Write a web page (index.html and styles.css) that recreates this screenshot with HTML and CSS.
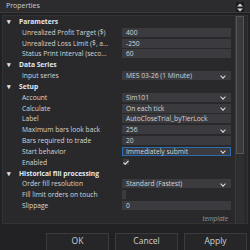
FILE: index.html
```html
<!DOCTYPE html>
<html lang="en">
<head>
<meta charset="UTF-8">
<title>Properties</title>
<link rel="stylesheet" href="styles.css">
</head>
<body>
<div class="window">

  <div class="title">Properties</div>
  <div class="sort-btn">
    <svg width="6" height="9" viewBox="0 0 6 9"><path d="M0 3.5 L3 0.5 L6 3.5 Z M0 5.5 L3 8.5 L6 5.5 Z" fill="#d8d8d8"/></svg>
  </div>

  <div class="grid">
    <div class="rows">

      <div class="row cat"><span class="caret">▾</span>Parameters</div>
      <div class="row"><span class="name">Unrealized Profit Target ($)</span><span class="val">400</span></div>
      <div class="row"><span class="name">Unrealized Loss Limit ($, a...</span><span class="val">-250</span></div>
      <div class="row"><span class="name">Status Print Interval (seco...</span><span class="val">60</span></div>

      <div class="row cat"><span class="caret">▾</span>Data Series</div>
      <div class="row"><span class="name">Input series</span><span class="val drop">MES 03-26 (1 Minute)</span></div>

      <div class="row cat"><span class="caret">▾</span>Setup</div>
      <div class="row"><span class="name">Account</span><span class="val drop">Sim101</span></div>
      <div class="row"><span class="name">Calculate</span><span class="val drop">On each tick</span></div>
      <div class="row"><span class="name">Label</span><span class="val">AutoCloseTrial_byTierLock</span></div>
      <div class="row"><span class="name">Maximum bars look back</span><span class="val drop">256</span></div>
      <div class="row"><span class="name">Bars required to trade</span><span class="val">20</span></div>
      <div class="row"><span class="name">Start behavior</span><span class="val drop focus">Immediately submit</span></div>
      <div class="row"><span class="name">Enabled</span><span class="check"><svg width="6" height="5" viewBox="0 0 6 5"><path d="M0.5 2.6 L2.2 4.2 L5.5 0.8" stroke="#e0e0e0" stroke-width="1.2" fill="none"/></svg></span></div>

      <div class="row cat"><span class="caret">▾</span>Historical fill processing</div>
      <div class="row"><span class="name">Order fill resolution</span><span class="val drop">Standard (Fastest)</span></div>
      <div class="row"><span class="name">Fill limit orders on touch</span><span class="val empty"></span></div>
      <div class="row"><span class="name">Slippage</span><span class="val">0</span></div>

      <div class="template">template</div>
    </div>

    <div class="scroll">
      <div class="thumb"></div>
    </div>
  </div>

  <div class="buttons">
    <div class="btn">OK</div>
    <div class="btn">Cancel</div>
    <div class="btn">Apply</div>
  </div>

</div>
</body>
</html>
```

FILE: styles.css
```css
:root {
  --bg: #212123;
  --panel: #29292b;
  --field: #3a3a3f;
  --border: #3c3c3e;
  --text: #d6d6d6;
  --head: #e2e8f2;
  --muted: #9a9a9a;
  --focus: #2a6db3;
}

* { margin: 0; padding: 0; box-sizing: border-box; }

body {
  background: var(--bg);
  color: var(--text);
  font-family: 'Open Sans', 'Noto Sans', sans-serif;
  font-size: 6.7px;
  width: 250px;
  height: 250px;
  overflow: hidden;
}

.window {
  position: relative;
  width: 250px;
  height: 250px;
  display: flex;
  flex-direction: column;
}

/* Title */
.title {
  height: 13px;
  line-height: 12px;
  padding-left: 6px;
  background: #2c2c2e;
  border-bottom: 1px solid #3a3a3c;
  color: #cfcfcf;
  font-size: 7px;
}

.sort-btn {
  position: absolute;
  top: 2px;
  right: 6px;
  width: 8px;
  height: 10px;
  display: flex;
  align-items: center;
  justify-content: center;
  background: #1c1c1e;
}

/* Property grid */
.grid {
  margin: 2px 2px 0 2px;
  height: 209px;
  background: var(--panel);
  border: 1px solid #333335;
  display: flex;
}

.rows {
  flex: 1;
  display: flex;
  flex-direction: column;
}

.row {
  height: 11px;
  display: flex;
  align-items: center;
  white-space: nowrap;
}

.row.cat {
  padding-left: 4px;
  color: var(--head);
  font-weight: 700;
}

.caret {
  width: 12px;
  font-size: 7px;
  color: #e6e6e6;
}

.name {
  width: 119px;
  padding-left: 19px;
  overflow: hidden;
}

.val {
  width: 109px;
  height: 9px;
  line-height: 9px;
  padding-left: 4px;
  background: var(--field);
  position: relative;
}

.val.empty { width: 4px; }

.val.drop::after {
  content: '';
  position: absolute;
  right: 6px;
  top: 2.5px;
  width: 3px;
  height: 3px;
  border-right: 1.2px solid #e0e0e0;
  border-bottom: 1.2px solid #e0e0e0;
  transform: rotate(45deg);
}

.val.focus {
  border: 1px solid var(--focus);
  line-height: 7px;
  padding-left: 3px;
}
.val.focus::after { right: 5px; top: 1.5px; }

.check {
  width: 6px;
  height: 6px;
  margin-left: 1px;
  display: flex;
  align-items: center;
  justify-content: center;
  background: #3d3d42;
}

.template {
  text-align: right;
  padding-right: 3px;
  margin-top: 3px;
  font-style: italic;
  font-size: 6.5px;
  color: var(--muted);
}

/* Scrollbar */
.scroll {
  width: 9px;
  margin: 0 3px 0 4px;
  background: #2e2e30;
  border-left: 1px solid #3a3a3c;
}

.thumb {
  height: 138px;
  background: #3a3a3c;
  border: 1px solid #555557;
}

/* Buttons */
.buttons {
  display: flex;
  justify-content: flex-end;
  gap: 6px;
  padding: 9px 3px 0 0;
}

.btn {
  width: 63px;
  height: 18px;
  line-height: 14px;
  text-align: center;
  background: #262628;
  border: 1px solid #3b3b3d;
  color: #cfcfcf;
  font-size: 8.5px;
}
```
